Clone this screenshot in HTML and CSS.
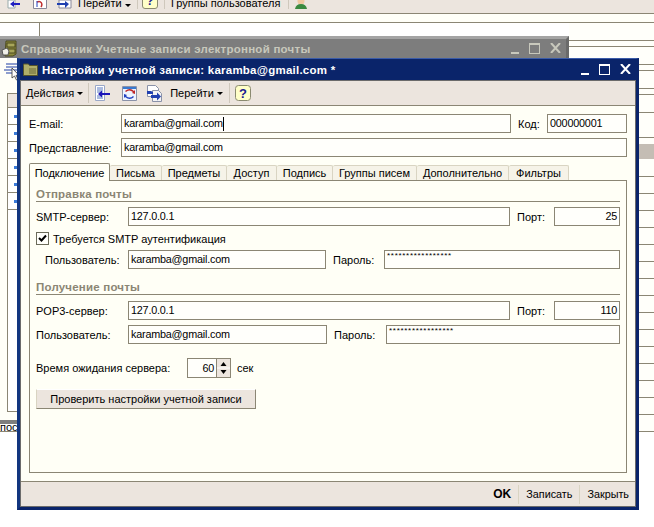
FILE: index.html
```html
<!DOCTYPE html>
<html lang="ru">
<head>
<meta charset="utf-8">
<title>Настройки учетной записи</title>
<link rel="stylesheet" href="styles.css">
</head>
<body>
<div class="desk">
  <div class="topbar">
    <svg class="ti ti-a" width="14" height="9" viewBox="0 0 14 9"><path d="M1 0h7v8H1z" fill="#fff" stroke="#9aa"/><path d="M13 3H7V1L3 4l4 3V5h6z" fill="#2020c0"/></svg>
    <svg class="ti ti-b" width="14" height="9" viewBox="0 0 14 9"><path d="M.5 0v8.500h13V0" fill="#fff" stroke="#889"/><path d="M4 2c4-2 6 2 4 5" fill="none" stroke="#c03030" stroke-width="1.500"/><path d="M4 1v6" stroke="#2040c0"/></svg>
    <svg class="ti ti-c" width="16" height="9" viewBox="0 0 16 9"><path d="M3 0h12v8H3z" fill="#fff" stroke="#889"/><path d="M1 0v3h8V1l4 3-4 4V5H1z" fill="#2040b0"/></svg>
    <span class="tt tt-go">Перейти</span><i class="caret"></i>
    <i class="tsep"></i>
    <svg class="ti" width="16" height="9" viewBox="0 0 16 9"><path d="M.5 0v6q0 2.500 2.500 2.500h10q2.500 0 2.500-2.500V0" fill="#ffffc8" stroke="#8a8a70"/><text x="8" y="5" font-size="12" font-weight="700" fill="#1a2090" text-anchor="middle" font-family="Liberation Sans">?</text></svg>
    <i class="tsep"></i>
    <span class="tt">Группы пользователя</span>
    <i class="tsep tsep-p"></i>
    <svg class="ti" width="14" height="10" viewBox="0 0 14 10"><circle cx="7" cy="2" r="3.500" fill="#f0c8a0"/><path d="M1 10q1-5 6-5t6 5z" fill="#3a8a40"/></svg>
  </div>
  <div class="band"></div>
  <div class="area"><div class="frame"></div></div>

  <div class="strip">
    <i class="rl rl-18"></i><i class="rl rl-6"></i><i class="rl rl-18"></i><i class="rl rl-6"></i><i class="rl rl-18"></i><i class="rl rl-6"></i><i class="rl rl-18"></i><i class="rl rl-25"></i><i class="rl rl-gray"></i>
    <i class="rl rl-17a"></i><i class="rl"></i><i class="rl"></i><i class="rl"></i><i class="rl"></i><i class="rl"></i><i class="rl"></i><i class="rl"></i><i class="rl"></i><i class="rl"></i><i class="rl"></i><i class="rl"></i><i class="rl"></i><i class="rl"></i><i class="rl"></i><i class="rl"></i>
  </div>

  <section class="back">
    <header class="back-title">
      <svg class="bt-ico" width="16" height="17" viewBox="0 0 16 17"><path d="M5 1h10v13l-3 2H4z" fill="#8c8a3c" stroke="#4c4a20"/><path d="M6 3h8v4H6zM6 9h8v4H6z" fill="#a8a65a" stroke="#4c4a20"/><path d="M1 10l5-2 2 3-1 4H2z" fill="#f0f0e8" stroke="#555"/></svg>
      <span>Справочник Учетные записи электронной почты</span>
      <span class="wbtns wbtns-back"><i class="wb-min"></i><i class="wb-max"></i><svg class="wb-x" width="11" height="10" viewBox="0 0 11 10"><path d="M1 0l9 10M10 0L1 10" stroke="currentColor" stroke-width="2"/></svg></span>
    </header>
    <div class="back-body">
      <svg class="lst" width="15" height="18" viewBox="0 0 15 18"><path d="M3 1h11M3 4h11M1 7h13M3 10h11" stroke="#6a7fc0" stroke-width="1.500"/><path d="M9 5v10l2.500-2 2 4 1.500-.7-2-4h3z" fill="#fff" stroke="#333" stroke-width=".8"/></svg>
      <div class="tbl">
        <div class="tbl-head"></div>
        <div class="tbl-row"><b></b></div><div class="tbl-row"><b></b></div><div class="tbl-row"><b></b></div><div class="tbl-row"><b></b></div><div class="tbl-row"><b></b></div><div class="tbl-row"><b></b></div>
        <div class="tbl-rest"></div>
      </div>
    </div>
    <div class="back-foot"></div>
    <div class="back-note">пос</div>
  </section>

  <section class="win">
    <header class="win-title">
      <svg class="wt-ico" width="15" height="13" viewBox="0 0 15 13"><path d="M.5 2.500V1h5l1 1.500h8v10H.5z" fill="#b0ae6a" stroke="#56542a"/><path d="M6 6h7M6 8h7M6 10h7" stroke="#6a6836"/></svg>
      <span class="wt-text">Настройки учетной записи: karamba@gmail.com *</span>
      <span class="wbtns"><i class="wb-min"></i><i class="wb-max"></i><svg class="wb-x" width="11" height="10" viewBox="0 0 11 10"><path d="M1 0l9 10M10 0L1 10" stroke="currentColor" stroke-width="2"/></svg></span>
    </header>
    <div class="win-in">
      <nav class="bar">
        <span class="menu">Действия</span><i class="caret caret-m"></i>
        <i class="sep sep-1"></i>
        <svg class="ic ic-1" width="17" height="17" viewBox="0 0 17 17"><path d="M1.500.5h9v15h-9z" fill="#fff" stroke="#9aa8c8"/><path d="M3 3h6M3 5h6M3 7h6M3 11h6M3 13h6" stroke="#5878c0"/><path d="M16 8H8V5.500L4 9l4 3.500V10h8z" fill="#1c14b8"/></svg>
        <svg class="ic ic-2" width="15" height="15" viewBox="0 0 15 15"><path d="M.5.500h14v14H.5z" fill="#eef4ff" stroke="#8a92a8"/><path d="M1 1h13v2H1z" fill="#3a7ad0"/><path d="M4 6q3-3 7 0l-1 1 3 1V4l-1 1Q8 1 3 5z" fill="#c02828"/><path d="M11 10q-3 3-7 0l1-1-3-1v4l1-1q5 4 9 0z" fill="#2040c0"/></svg>
        <svg class="ic ic-3" width="17" height="17" viewBox="0 0 17 17"><path d="M1.500.5h8l3 3v8h-11z" fill="#fff" stroke="#8a92a8"/><path d="M6.500 5.500h6l3 3v8h-9z" fill="#f4f4f4" stroke="#8a92a8"/><path d="M1 6v3h6V7l-2-1zM1 6l3 0M5 10h6V7.500l4 4-4 4V13H5z" fill="#2040b0"/></svg>
        <span class="menu menu-go">Перейти</span><i class="caret caret-m"></i>
        <i class="sep sep-2"></i>
        <svg class="ic ic-4" width="16" height="16" viewBox="0 0 16 16"><rect x=".5" y=".5" width="15" height="15" rx="3" fill="#ffffc8" stroke="#8a8a70"/><text x="8" y="13" font-size="13" font-weight="700" fill="#1a2090" text-anchor="middle" font-family="Liberation Sans">?</text></svg>
      </nav>
      <form class="body">
        <div class="row row-top">
          <label class="lb lb-main">E-mail:</label>
          <span class="in in-fill in-caret">karamba@gmail.com<i class="cur"></i></span>
          <label class="lb lb-kod">Код:</label>
          <span class="in in-kod">000000001</span>
        </div>
        <div class="row row-pres">
          <label class="lb lb-main">Представление:</label>
          <span class="in in-fill">karamba@gmail.com</span>
        </div>
        <div class="tabs">
          <span class="tab tab-on">Подключение</span>
          <span class="tab">Письма</span>
          <span class="tab">Предметы</span>
          <span class="tab">Доступ</span>
          <span class="tab">Подпись</span>
          <span class="tab">Группы писем</span>
          <span class="tab">Дополнительно</span>
          <span class="tab">Фильтры</span>
        </div>
        <div class="panel">
          <h3 class="sec">Отправка почты</h3>
          <div class="row row-6">
            <label class="lb lb-srv">SMTP-сервер:</label>
            <span class="in in-fill in-srv">127.0.0.1</span>
            <label class="lb lb-port">Порт:</label>
            <span class="in in-port">25</span>
          </div>
          <div class="row row-chk">
            <i class="chk"><svg width="11" height="11" viewBox="0 0 11 11"><path d="M2 5l2.500 2.500L9 2.500" fill="none" stroke="#000" stroke-width="2"/></svg></i>
            <label class="lb">Требуется SMTP аутентификация</label>
          </div>
          <div class="row row-user">
            <label class="lb lb-user">Пользователь:</label>
            <span class="in in-u1">karamba@gmail.com</span>
            <label class="lb lb-p1">Пароль:</label>
            <span class="in in-fill in-pw">*****************</span>
          </div>
          <h3 class="sec sec-2">Получение почты</h3>
          <div class="row row-7">
            <label class="lb lb-srv">POP3-сервер:</label>
            <span class="in in-fill in-srv">127.0.0.1</span>
            <label class="lb lb-port">Порт:</label>
            <span class="in in-port">110</span>
          </div>
          <div class="row row-5">
            <label class="lb lb-srv">Пользователь:</label>
            <span class="in in-u2">karamba@gmail.com</span>
            <label class="lb lb-p2">Пароль:</label>
            <span class="in in-fill in-pw">*****************</span>
          </div>
          <div class="row row-time">
            <label class="lb lb-time">Время ожидания сервера:</label>
            <span class="in in-time">60<span class="spin"><svg width="13" height="18" viewBox="0 0 13 18"><path d="M6.500 3l3 4h-6zM3.500 11h6l-3 4z" fill="#000"/><path d="M0 9h13" stroke="#fff"/></svg></span></span>
            <label class="lb lb-sec">сек</label>
          </div>
          <button class="btn" type="button">Проверить настройки учетной записи</button>
        </div>
      </form>
      <footer class="status">
        <span class="st st-ok">OK</span><i class="st-sep"></i>
        <span class="st">Записать</span><i class="st-sep"></i>
        <span class="st">Закрыть</span>
      </footer>
    </div>
  </section>
</div>
</body>
</html>
```
FILE: styles.css
```css
* { box-sizing: border-box; }
html, body { margin: 0; padding: 0; background: #fff; }
body { width: 654px; height: 527px; overflow: hidden; font: 11px/14px "Liberation Sans", Arial, sans-serif; color: #000; }
i { display: block; font-style: normal; }

.desk { position: relative; width: 654px; height: 527px; overflow: hidden; background: #fff; }
.topbar { height: 14px; background: #ece5de; border-bottom: 1px solid #8b8674; display: flex; align-items: flex-end; padding: 0 0 4px 7px; overflow: hidden; }
.ti { flex: none; margin-bottom: 0; }
.ti-a { margin-right: 12px; }
.ti-b { margin-right: 9px; }
.ti-c { margin-right: 5px; }
.tt { line-height: 14px; margin-bottom: -1px; }
.tt-go { width: 44px; margin-left: 1px; margin-right: 0; }
.caret { width: 0; height: 0; border: 3px solid transparent; border-top-color: #000; border-bottom: 0; margin: 0 0 2px 3px; }
.tsep { width: 1px; height: 14px; background: #cfc8bc; margin: 0 4px 0 6px; }
.tsep + .tt { margin-left: 2px; }
.tsep-p { margin: 0 5px 0 8px; }
.band { height: 9px; background: #fffff8; border-bottom: 1px solid #8b8674; }
.area { height: 504px; }
.frame { margin-left: 39px; height: 14px; border-left: 1px solid #8b8674; }

.strip { position: absolute; left: 569px; top: 23px; width: 85px; display: flex; flex-direction: column; background: #fffffa; }
.rl { height: 17px; border-bottom: 1px solid #8b8674; }
.rl-18 { height: 18px; }
.rl-6 { height: 6px; }
.rl-25 { height: 25px; }
.rl-gray { height: 22px; background: linear-gradient(#fffffa 6px, #c4bdb4 6px, #c4bdb4 21px, #fffffa 21px); border-bottom: 0; }
.rl-17a { height: 17px; }

.back { position: absolute; left: 0; top: 36px; width: 569px; height: 396px; display: flex; flex-direction: column; }
.back-title { height: 22px; background: #7d7d7d; border-top: 3px solid #a4a4a4; border-right: 3px solid #6a6a6a; display: flex; align-items: center; padding: 0 5px 0 1px; font-weight: 700; font-size: 11.500px; color: #c8c8bc; letter-spacing: .25px; flex: none; }
.bt-ico { margin-right: 4px; flex: none; }
.back-body { height: 362px; background: #fffff8; position: relative; border-right: 3px solid #6a6a6a; flex: none; }
.lst { position: absolute; left: 3px; top: 5px; }
.tbl { position: absolute; left: 7px; top: 35px; width: 10px; border-left: 1px solid #8b8674; }
.tbl-head { height: 15px; background: #ece5de; border-top: 1px solid #8b8674; border-bottom: 1px solid #8b8674; }
.tbl-row { height: 17px; border-bottom: 1px solid #8b8674; background: #fff; position: relative; }
.tbl-row b { position: absolute; right: 0; top: 7px; width: 3px; height: 3px; background: #3a7ad8; }
.tbl-rest { height: 202px; border-bottom: 1px solid #8b8674; background: #fff; }
.back-foot { height: 4px; width: 17px; background: #7d7d7d; flex: none; }
.back-note { height: 8px; width: 17px; border-bottom: 1px solid #8b8674; line-height: 6px; overflow: hidden; flex: none; background: #fff; padding-left: 0; }

.win { position: absolute; left: 17px; top: 58px; width: 622px; height: 452px; background: #0a246a; border: 3px solid #0a246a; border-top: 1px solid #3a5ba8; border-left-color: #12357f; display: flex; flex-direction: column; }
.win-title { height: 21px; flex: none; display: flex; align-items: center; padding: 0 5px 0 3px; color: #fff; font-weight: 700; font-size: 11.500px; letter-spacing: .24px; }
.wt-ico { margin-right: 4px; flex: none; }
.wt-text { flex: 1; }
.wbtns { display: flex; align-items: flex-end; height: 11px; color: #fff; letter-spacing: 0; }
.wb-min { width: 8px; height: 2px; background: currentColor; margin-right: 10px; }
.wb-max { width: 11px; height: 11px; border: 1px solid currentColor; border-top-width: 2px; margin-right: 10px; }
.wb-x { display: block; margin-bottom: 1px; }
.wbtns-back { margin-left: auto; color: #c8c8bc; }

.win-in { flex: 1; border: 1px solid #6b6b6b; background: #fffff6; display: flex; flex-direction: column; min-height: 0; }
.bar { height: 25px; flex: none; background: #ece5de; border-bottom: 1px solid #8b8674; display: flex; align-items: center; padding-left: 5px; }
.menu { line-height: 14px; }
.caret-m { margin: 1px 0 0 3px; }
.sep { width: 1px; height: 20px; background: #cfc8bc; }
.sep-1 { margin: 0 5px 0 5px; }
.sep-2 { margin: 0 5px 0 6px; }
.ic { flex: none; display: block; }
.ic-2 { margin-left: 11px; }
.ic-3 { margin-left: 9px; }
.menu-go { margin-left: 7px; }

.body { flex: 1; display: flex; flex-direction: column; padding: 8px 8px 8px 8px; min-height: 0; }
.row { display: flex; align-items: center; flex: none; }
.row-pres { margin-top: 5px; }
.lb { flex: none; white-space: nowrap; }
.lb-main { width: 92px; }
.lb-kod { width: 29px; margin-left: 7px; }
.in { display: block; height: 19px; border: 1px solid #8b8674; background: #fffffb; padding: 0 0 0 2px; font-size: 10.800px; letter-spacing: -.2px; line-height: 17px; white-space: nowrap; overflow: hidden; flex: none; position: relative; }
.in-fill { flex: 1; min-width: 0; }
.cur { position: absolute; left: 101px; top: 2px; width: 1px; height: 14px; background: #000; }
.in-kod { width: 80px; }

.tabs { display: grid; grid-template-columns: 81px 52px 65px 50px 56px 84px 92px 60px; justify-content: start; height: 17px; margin-top: 6px; flex: none; position: relative; z-index: 1; }
.tab { height: 15px; margin-top: 2px; background: #f6f3e8; border: 1px solid #d9d4c2; border-bottom: 0; border-left: 0; text-align: center; line-height: 14px; border-radius: 2px 2px 0 0; }
.tab-on { height: 18px; margin-top: 0; background: #fffff6; border: 1px solid #8b8674; border-bottom: 0; border-right-color: #8b8674; line-height: 19px; }

.panel { flex: 1; border: 1px solid #8b8674; padding: 6px 6px 0 6px; display: flex; flex-direction: column; min-height: 0; align-items: stretch; }
.sec { margin: 0; height: 15px; font-size: 11.500px; line-height: 14px; font-weight: 700; color: #8b8674; border-bottom: 1px solid #8b8674; letter-spacing: .2px; flex: none; }
.sec-2 { margin-top: 11px; }
.row-6 { margin-top: 5px; }
.row-7 { margin-top: 6px; }
.row-5 { margin-top: 5px; }
.row-chk { margin-top: 6px; height: 13px; }
.row-user { margin-top: 5px; padding-left: 9px; }
.row-time { margin-top: 14px; height: 20px; }
.lb-srv { width: 92px; }
.lb-port { width: 37px; margin-left: 7px; }
.in-srv { min-width: 0; }
.in-port { width: 66px; text-align: right; padding: 0 2px 0 0; }
.chk { width: 13px; height: 13px; border: 1px solid #6b6b5a; background: #fffffb; margin-right: 4px; flex: none; }
.chk svg { display: block; }
.lb-user { width: 83px; }
.in-u1 { width: 198px; }
.in-u2 { width: 199px; }
.lb-p1 { width: 51px; margin-left: 7px; }
.lb-p2 { width: 52px; margin-left: 7px; }
.in-pw { font-size: 8px; line-height: 8px; letter-spacing: .7px; padding-top: 1px; }
.lb-time { width: 151px; }
.in-time { width: 44px; height: 20px; padding: 0 16px 0 0; text-align: right; line-height: 18px; }
.spin { position: absolute; right: 0; top: 0; width: 14px; height: 18px; background: #ece5de; border-left: 1px solid #8b8674; }
.spin svg { display: block; }
.lb-sec { margin-left: 6px; }
.btn { display: block; margin: 11px 0 0 0; width: 220px; height: 20px; padding: 0; background: #ece5de; border: 1px solid; border-color: #fff #8b8674 #8b8674 #d9d4c2; font: 11px/14px "Liberation Sans", Arial, sans-serif; color: #000; flex: none; }

.status { height: 25px; flex: none; background: #ece5de; border-top: 1px solid #8b8674; display: flex; align-items: center; justify-content: flex-end; padding-right: 6px; }
.st { font-size: 10.800px; }
.st-ok { font-weight: 700; font-size: 12px; letter-spacing: 0; }
.st-sep { width: 1px; height: 19px; background: #d9d4c2; margin: 0 7px; }
```
